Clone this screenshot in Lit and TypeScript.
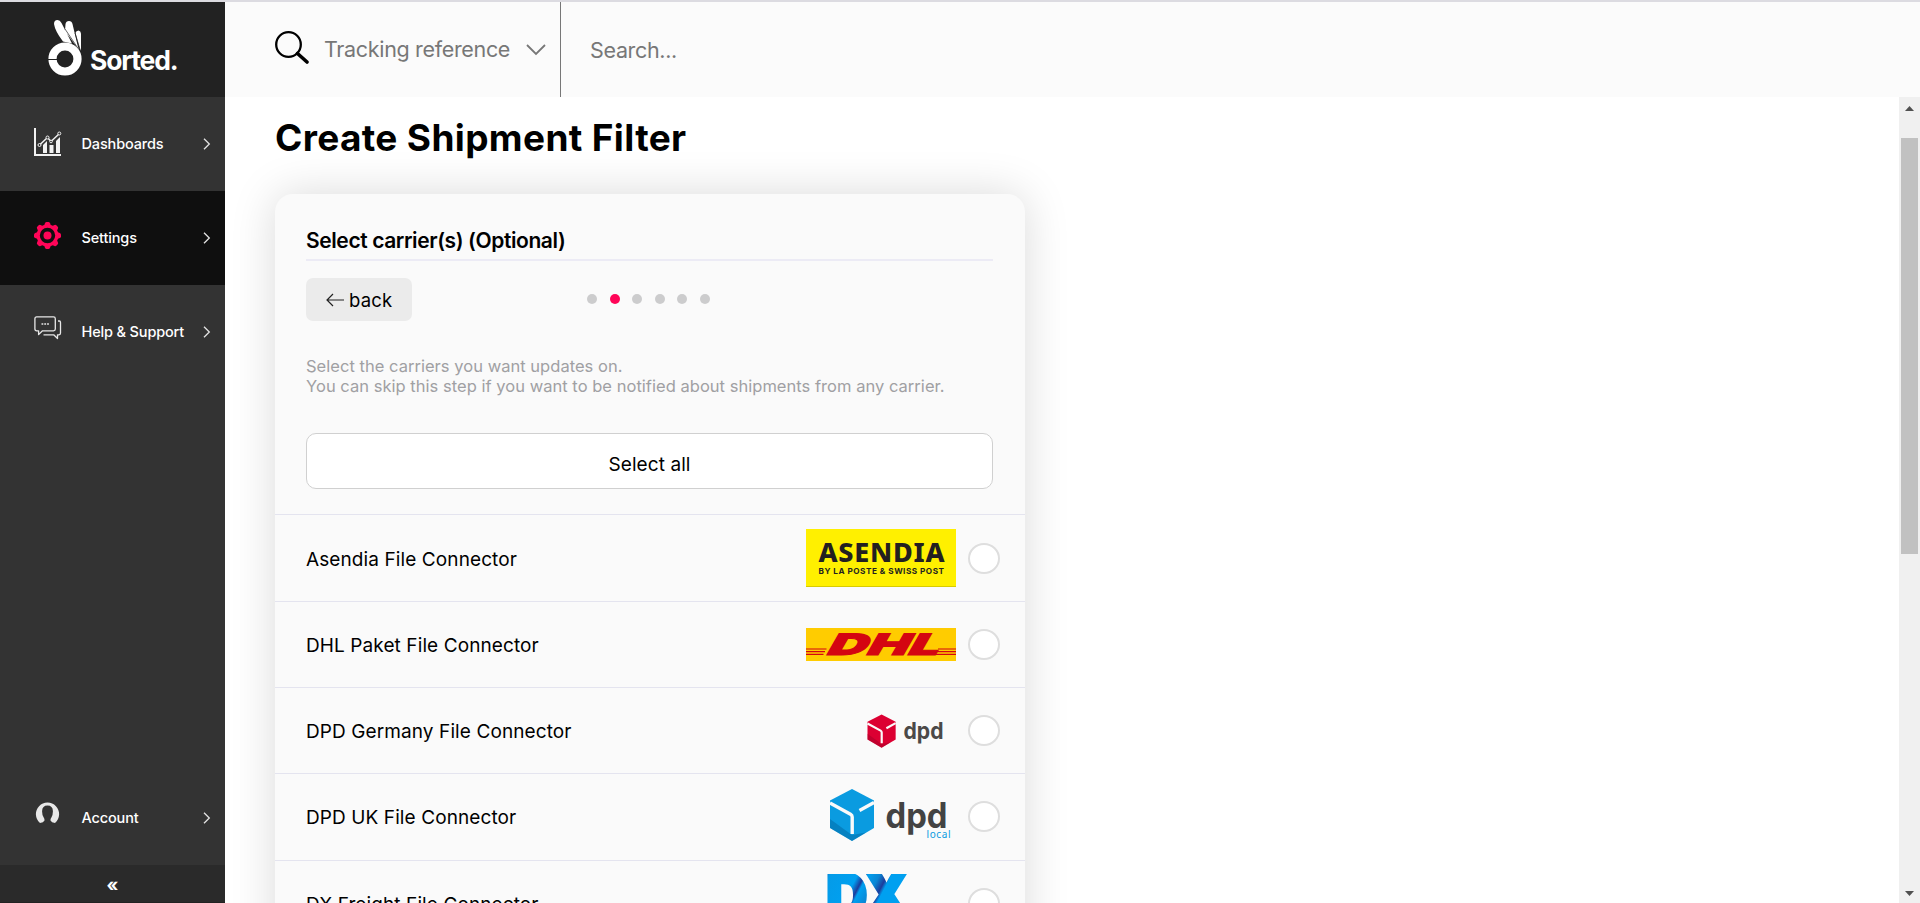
import { LitElement, html, css, svg } from "lit";
import { customElement } from "lit/decorators.js";
import { classMap } from "lit/directives/class-map.js";

const chevronRight = html`<svg width="8" height="12" viewBox="0 0 8 12"><path d="M1 .7L6.3 6L1 11.3" fill="none" stroke="#e4e4e4" stroke-width="1.3"/></svg>`;

const icons = {
  dashboards: html`<svg width="28" height="28" viewBox="0 0 28 28" fill="#f2f2f2">
    <path d="M0 0H2V26H27V28H0Z"/>
    <path d="M9 17L13 13V25H9ZM15.500 17H19.500V25H15.500ZM22 13L26 9V25H22Z"/>
    <path d="M5.500 17L13.500 9.500L17 13.500L25.500 5.500" fill="none" stroke="#f2f2f2" stroke-width="1.500"/>
    <g fill="#333" stroke="#f2f2f2"><circle cx="5.500" cy="17" r="1.500"/><circle cx="13.500" cy="9.500" r="1.500"/><circle cx="17" cy="13.500" r="1.300"/><circle cx="25.300" cy="5.500" r="1.500"/></g>
  </svg>`,
  settings: html`<svg width="28" height="28" viewBox="-13.500 -13.500 28 28">
    ${[0, 45, 90, 135, 180, 225, 270, 315].map(
      (a) => svg`<path transform="rotate(${a})" d="M-4 -8.500L-2.500 -12.300Q-2 -13.500 -1 -13.500H1Q2 -13.500 2.500 -12.300L4 -8.500Z" fill="#ff0558"/>`
    )}
    <circle r="9.300" fill="none" stroke="#ff0558" stroke-width="3.200"/>
    <circle r="4" fill="#ff0558"/>
  </svg>`,
  help: html`<svg width="28" height="24" viewBox="0 0 28 24" fill="none" stroke="#e8e8e8" stroke-width="1.300" stroke-linejoin="round">
    <path d="M2.700 .9H19.500Q21.300 .9 21.300 2.700V13Q21.300 14.800 19.500 14.800H8.500L4.600 18.600V14.800H2.700Q.9 14.800 .9 13V2.700Q.9 .9 2.700 .9Z"/>
    <path d="M24 5H25.300Q26.500 5 26.500 6.600V17Q26.500 18.800 25 18.800H23.500V22.500L19.700 18.800H9.500"/>
    <path d="M7.500 8H9.300M10.300 8H12.100M13.100 8H14.900" stroke-width="1.600"/>
  </svg>`,
  account: html`<svg width="28" height="24" viewBox="0 0 28 24">
    <path d="M6 21A11.600 11.600 0 1 1 21 21Q17.500 20.500 16.500 18.500Q16.300 17 17.400 15.500Q19 13 18.900 9Q18.700 3.500 13.500 3.500Q8.300 3.500 8.100 9Q8 13 9.700 15.500Q10.700 17 10.500 18.500Q9.500 20.500 6 21Z" fill="#e8e8e8"/>
  </svg>`,
};

@customElement("nav-item")
class NavItem extends LitElement {
  static properties = { icon: {}, label: {}, active: { type: Boolean, reflect: true } };
  declare icon: keyof typeof icons;
  declare label: string;
  static styles = css`
    :host { display: flex; align-items: center; height: 94px; padding: 0 14px 0 34px; box-sizing: border-box; color: #fff; font-size: 14.500px; font-weight: 450; letter-spacing: -.150px; }
    :host([active]) { background: #0f0f0f; }
    .icon { display: flex; width: 28px; height: 28px; margin-right: 19.500px; margin-bottom: 4px; }
    .label { flex: 1; white-space: nowrap; padding-bottom: 1px; }
  `;
  render() {
    return html`<span class="icon">${icons[this.icon]}</span><span class="label">${this.label}</span>${chevronRight}`;
  }
}

const cube = (c: string, d: string) => svg`
  <path d="M22 0L44 11.500V39L22 52L0 39V11.500Z" fill="${c}"/>
  <path d="M0 30V39L22 52L36 43.500L22 46Z" fill="${d}" opacity=".45"/>
  <path d="M0 14L20.500 25.200Q22.200 26.200 22.200 28V45" fill="none" stroke="#fafafa" stroke-width="3.400"/>
  <path d="M29.500 21.500L44 13.500" fill="none" stroke="#fafafa" stroke-width="3.400"/>`;

const logos: Record<string, unknown> = {
  asendia: html`<svg width="150" height="58" viewBox="0 0 150 58">
    <rect width="150" height="58" fill="#fff000"/><rect y="57" width="150" height="1" fill="#d8cb00"/>
    <text x="12.500" y="33.400" font-family="Noto Sans" font-weight="800" font-size="27" textLength="126" fill="#231f20">ASENDIA</text>
    <text x="12.500" y="45" font-family="Inter" font-weight="700" font-size="8.200" textLength="125.500" fill="#231f20">BY LA POSTE &amp; SWISS POST</text>
  </svg>`,
  dhl: html`<svg width="150" height="33" viewBox="0 0 150 33">
    <rect width="150" height="33" fill="#fc0"/>
    <path d="M0 21H20.500M0 23.700H19M0 26.400H17.500M132 21H150M130.500 23.700H150M129 26.400H150" stroke="#d40511" stroke-width="1.200"/>
    <text transform="translate(18.500 27.200) skewX(-30)" font-family="Inter" font-weight="900" font-size="29.500" textLength="112" lengthAdjust="spacingAndGlyphs" fill="#d40511" stroke="#d40511" stroke-width="1">DHL</text>
  </svg>`,
  dpdde: html`<svg width="150" height="58" viewBox="0 0 150 58">
    <g transform="translate(61.500 12.500) scale(.64)">${cube("#dc0032", "#a00028")}</g>
    <text x="97.500" y="37" font-family="Inter" font-weight="650" font-size="23" textLength="40" lengthAdjust="spacingAndGlyphs" fill="#4b4948">dpd</text>
  </svg>`,
  dpduk: html`<svg width="150" height="58" viewBox="0 0 150 58">
    <g transform="translate(24 1)">${cube("#0a9be0", "#00619c")}</g>
    <text x="79.500" y="40" font-family="Inter" font-weight="700" font-size="35" textLength="62" lengthAdjust="spacingAndGlyphs" fill="#434343">dpd</text>
    <text x="120.500" y="49.500" font-family="Noto Sans" font-size="10" textLength="24" fill="#0a9be0">local</text>
  </svg>`,
  dx: html`<svg width="150" height="58" viewBox="0 0 150 58">
    <defs><linearGradient id="dx" x1="0" y1="0" x2="1" y2=".45">
      <stop offset="0" stop-color="#1b2a8c"/><stop offset=".12" stop-color="#049be8"/><stop offset=".4" stop-color="#00a0f0"/><stop offset=".47" stop-color="#1c3c9c"/><stop offset=".5" stop-color="#00a0f0"/><stop offset=".62" stop-color="#0a86d4"/><stop offset=".7" stop-color="#1c3c9c"/><stop offset=".74" stop-color="#00a0f0"/><stop offset="1" stop-color="#00a0f0"/>
    </linearGradient></defs>
    <text x="20" y="43" font-family="Inter" font-weight="900" font-size="60" textLength="83" lengthAdjust="spacingAndGlyphs" fill="url(#dx)" stroke="url(#dx)" stroke-width="2.500">DX</text>
  </svg>`,
};

@customElement("carrier-row")
class CarrierRow extends LitElement {
  static properties = { name: {}, logo: {} };
  declare name: string;
  declare logo: string;
  static styles = css`
    :host { display: flex; align-items: center; height: 86.300px; box-sizing: border-box; border-top: 1px solid #e4e4ef; padding: 0 25px 0 31px; font-size: 19px; letter-spacing: .100px; }
    .name { flex: 1; padding-top: 2px; }
    .logo { display: flex; align-items: center; width: 150px; height: 58px; margin-right: 12px; letter-spacing: 0; }
    .check { width: 32px; height: 31px; box-sizing: border-box; border: 2px solid #dedede; border-radius: 50%; background: #fff; }
  `;
  render() {
    return html`<span class="name">${this.name}</span><span class="logo">${logos[this.logo]}</span><span class="check"></span>`;
  }
}

@customElement("app-root")
class AppRoot extends LitElement {
  static styles = css`
    :host { display: flex; flex-direction: column; width: 1920px; height: 903px; overflow: hidden; box-sizing: border-box; border-top: 2px solid #dcdbe1; background: #fff; color: #000; font-family: Inter, "Liberation Sans", sans-serif; }
    .shell { flex: 1; display: flex; min-height: 0; }
    .side { width: 225px; background: #333; display: flex; flex-direction: column; }
    .brand { height: 95px; background: #222; display: flex; }
    .grow { flex: 1; }
    .collapse { height: 38px; border-bottom: 1px solid #222; background: #2a2a2a; color: #fff; display: flex; align-items: center; justify-content: center; font-weight: 700; font-size: 18px; padding-top: 2px; box-sizing: border-box; }
    .main { flex: 1; display: flex; flex-direction: column; min-width: 0; }
    .top { height: 95px; background: #fbfbfb; display: flex; color: #777; font-size: 21.500px; letter-spacing: -.330px; }
    .kind { width: 335px; box-sizing: border-box; padding: 0 14px 0 50px; display: flex; align-items: center; }
    .kind .txt { flex: 1; padding: 0 0 1px 15px; }
    .search { border-left: 1px solid #777; padding-left: 29px; display: flex; align-items: center; padding-top: 1px; }
    .glass { margin-bottom: 4px; }
    .body { flex: 1; display: flex; min-height: 0; }
    .content { flex: 1; overflow: hidden; padding: 17px 50px 0; }
    h1 { margin: 0; font-size: 37px; line-height: 48px; font-weight: 650; letter-spacing: .350px; }
    .card { width: 750px; height: 900px; margin-top: 32px; border-radius: 18px; background: #fafafa; box-shadow: 0 0 45px rgba(0,0,0,.15); }
    .head { padding: 30px 32px 0 31px; height: 320.400px; box-sizing: border-box; display: flex; flex-direction: column; }
    h2 { margin: 0; font-size: 21px; line-height: 33px; padding-bottom: 2px; font-weight: 600; letter-spacing: -.400px; border-bottom: 2px solid #ecebf5; }
    .steps { display: grid; grid-template-columns: 1fr auto 1fr; margin-top: 17px; height: 43px; }
    .back { width: 106px; height: 43px; box-sizing: border-box; border-radius: 7px; background: #ebebeb; display: flex; align-items: center; padding: 0 0 0 20px; gap: 5px; font-size: 18.500px; letter-spacing: .150px; }
    .dots { display: flex; gap: 12.600px; padding: 16px 2px 0 0; }
    .dot { width: 10px; height: 10px; border-radius: 50%; background: #cccccd; }
    .dot.on { background: #ff0558; }
    .hint { margin: 35px 0 0; line-height: 20px; color: #a0a0a3; font-size: 16.500px; letter-spacing: .030px; }
    .all { margin-top: 37px; height: 56px; box-sizing: border-box; border: 1px solid #d0d0d0; border-radius: 10px; background: #fff; display: flex; align-items: center; justify-content: center; padding-top: 6px; font-size: 19px; letter-spacing: .080px; }
    .bar { width: 21px; background: #f0f0f0; display: flex; flex-direction: column; align-items: center; padding: 9px 0 7px; box-sizing: border-box; }
    .thumb { width: 17px; height: 416px; margin-top: 27px; background: #c1c1c1; }
  `;
  render() {
    const carriers = [
      ["Asendia File Connector", "asendia"],
      ["DHL Paket File Connector", "dhl"],
      ["DPD Germany File Connector", "dpdde"],
      ["DPD UK File Connector", "dpduk"],
      ["DX Freight File Connector", "dx"],
    ];
    return html`<div class="shell">
      <nav class="side">
        <div class="brand"><svg width="225" height="95" viewBox="0 2 225 95">
          <path d="M54 24Q54 20 57.500 20Q60 20 61.500 23L72 43.500L63 41.500Q55 31 54 24ZM65.500 24Q66 21 69 21Q71.800 21 72.500 24L77.500 45L79 50L65 31Z" fill="#fff"/>
          <path d="M75.500 33Q76 30.500 78.500 30.500Q80.800 31 81 33.500V51L79.500 48Z" fill="#fff"/>
          <path d="M65 29L80.500 52M75 33L80.500 51" stroke="#222" stroke-width=".7"/>
          <circle cx="65" cy="59" r="12.500" fill="none" stroke="#fff" stroke-width="8.200"/>
          <path d="M48 59.500H57" stroke="#222" stroke-width="1"/>
          <text x="90" y="69.700" font-family="Inter" font-weight="700" font-size="26.500" textLength="88.500" fill="#fff">Sorted.</text>
        </svg></div>
        <nav-item icon="dashboards" label="Dashboards"></nav-item>
        <nav-item icon="settings" label="Settings" active></nav-item>
        <nav-item icon="help" label="Help &amp; Support"></nav-item>
        <div class="grow"></div>
        <nav-item icon="account" label="Account"></nav-item>
        <div class="collapse">«</div>
      </nav>
      <div class="main">
        <div class="top">
          <div class="kind">
            <svg class="glass" width="34" height="33" viewBox="0 0 34 33" fill="none" stroke="#000"><circle cx="13.500" cy="13.500" r="12.300" stroke-width="2.300"/><path d="M22.500 22.500L32 31" stroke-width="3.600" stroke-linecap="round"/></svg>
            <span class="txt">Tracking reference</span>
            <svg width="20" height="12" viewBox="0 0 20 12"><path d="M1 1L10 10L19 1" fill="none" stroke="#777" stroke-width="1.800"/></svg>
          </div>
          <div class="search">Search...</div>
        </div>
        <div class="body">
          <div class="content">
            <h1>Create Shipment Filter</h1>
            <section class="card">
              <div class="head">
                <h2>Select carrier(s) (Optional)</h2>
                <div class="steps">
                  <div class="back"><svg width="18" height="14" viewBox="0 0 18 14"><path d="M7 1L1 7L7 13M1 7H18" fill="none" stroke="#222" stroke-width="1.200"/></svg><span>back</span></div>
                  <div class="dots">${[0, 1, 2, 3, 4, 5].map((i) => html`<span class=${classMap({ dot: true, on: i === 1 })}></span>`)}</div>
                </div>
                <p class="hint">Select the carriers you want updates on.<br>You can skip this step if you want to be notified about shipments from any carrier.</p>
                <div class="all">Select all</div>
              </div>
              ${carriers.map(([name, logo]) => html`<carrier-row .name=${name} .logo=${logo}></carrier-row>`)}
            </section>
          </div>
          <div class="bar">
            <svg width="9" height="5" viewBox="0 0 9 5"><path d="M0 5L4.500 0L9 5Z" fill="#505050"/></svg>
            <div class="thumb"></div><div class="grow"></div>
            <svg width="9" height="5" viewBox="0 0 9 5"><path d="M0 0L4.500 5L9 0Z" fill="#505050"/></svg>
          </div>
        </div>
      </div>
    </div>`;
  }
}
